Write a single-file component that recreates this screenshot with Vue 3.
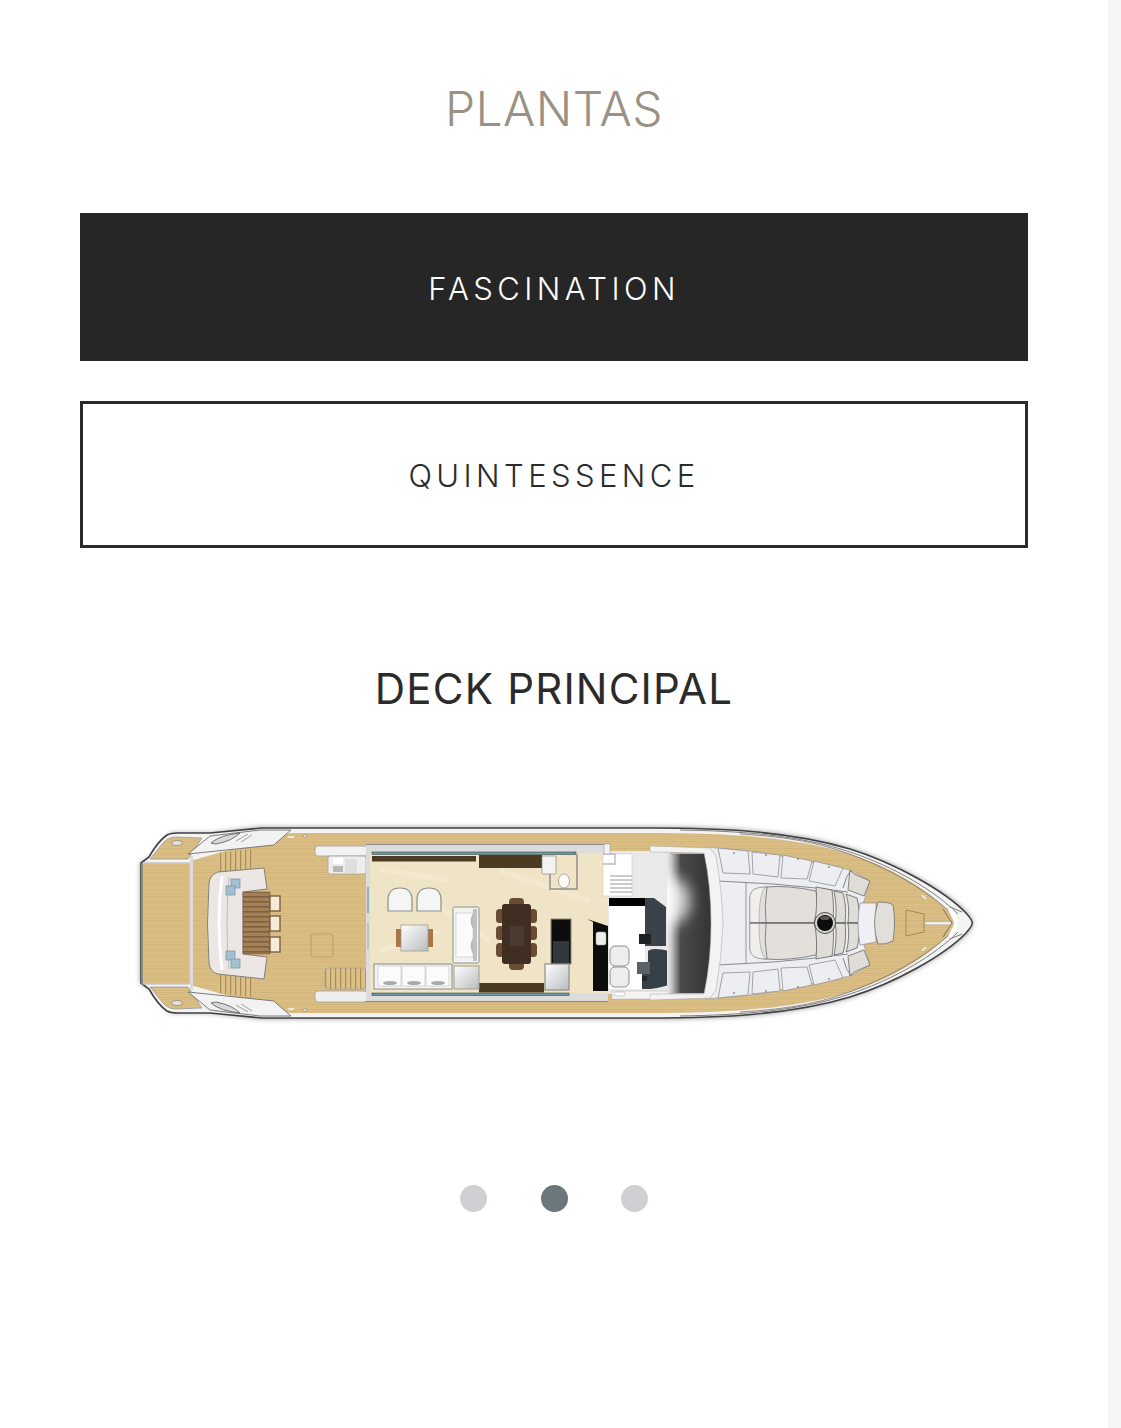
<script setup>
const foreSeats = [
  '718,847 748,850 750,873 723,872',
  '752,851 780,854 778,876 753,873',
  '783,854 812,860 807,878 781,877',
  '814,860 843,867 835,885 809,880'
]
const segments = [
  'M816,886 L832,889 C834,905 834,915 832,922 L814,922 C817,912 817,898 816,886 Z',
  'M834,890 L843,892 C846,903 846,913 845,922 L835,922 C837,912 836,900 834,890 Z',
  'M846,893 L857,897 C859,905 860,914 859,922 L848,922 C849,912 849,902 846,893 Z'
]
const blueSlits = [[372, 851, 204], [372, 992, 197]]
const armchairs = [388, 417]
const sofaSeats = [378, 402, 426]
const tableChairs = [895, 915, 936]
const cushions = [[231, 878], [226, 885], [226, 950], [231, 958]]
const dots = [false, true, false]
</script>

<template>
  <div class="page">
    <main class="content">
      <h1 class="title">PLANTAS</h1>
      <button class="tab tab-active" type="button">FASCINATION</button>
      <button class="tab" type="button">QUINTESSENCE</button>
      <h2 class="deck">DECK PRINCIPAL</h2>

      <svg class="plan" viewBox="120 810 870 220" width="870" height="220" role="img" aria-label="Deck principal">
        <defs>
          <pattern id="teak" width="8" height="2.4" patternUnits="userSpaceOnUse">
            <rect width="8" height="2.4" fill="#dcbf85" />
            <rect width="8" height="0.7" fill="#d0b278" />
          </pattern>
          <pattern id="tread" width="5" height="8" patternUnits="userSpaceOnUse">
            <rect width="5" height="8" fill="#dcc086" />
            <rect width="1.2" height="8" fill="#a88d5a" />
          </pattern>
          <pattern id="tabletop" width="10" height="5" patternUnits="userSpaceOnUse">
            <rect width="10" height="5" fill="#a38056" />
            <rect width="10" height="1.6" fill="#7f5f3c" />
          </pattern>
          <linearGradient id="screen" x1="0" x2="1" y1="0" y2="0">
            <stop offset="0" stop-color="#e8e8e8" />
            <stop offset="0.08" stop-color="#cfcfcf" />
            <stop offset="0.3" stop-color="#4a4a4a" />
            <stop offset="1" stop-color="#333" />
          </linearGradient>
          <linearGradient id="mirror" x1="0" x2="1" y1="0" y2="1">
            <stop offset="0" stop-color="#fff" />
            <stop offset="1" stop-color="#b9bcbf" />
          </linearGradient>
          <filter id="soft" x="-5%" y="-5%" width="110%" height="110%">
            <feGaussianBlur stdDeviation="0.55" />
          </filter>
          <filter id="haze" x="-5%" y="-10%" width="110%" height="120%">
            <feGaussianBlur stdDeviation="2.5" />
          </filter>
          <filter id="glow" x="-60%" y="-60%" width="220%" height="220%">
            <feGaussianBlur stdDeviation="7" />
          </filter>
          <clipPath id="screenClip">
            <path d="M667,853 L706,853 Q712,890 713,922 Q712,960 706,992 L667,992 Z" />
          </clipPath>
          <g id="half">
            <!-- stern quarter pad -->
            <path d="M150,858 L163,842 Q168,836 176,836 L202,837 L188,858 Z" fill="url(#teak)" stroke="#9b9b9b" stroke-width="0.8" />
            <ellipse cx="177" cy="842" rx="5.5" ry="2.5" fill="#e6e1d6" stroke="#8f8a7e" stroke-width="0.8" />
            <!-- aft side deck moulding -->
            <path d="M188,853 L210,835 L260,829 L291,829 L276,842 L274,844 Z" fill="#f2f2f3" stroke="#6e6e6e" stroke-width="0.9" />
            <path d="M211,842 Q220,834 240,832 Q232,840 216,843 Z" fill="#d8d8da" stroke="#555" stroke-width="0.8" />
            <path d="M236,840 L248,833 M241,841 L252,834" stroke="#8a8a8a" stroke-width="0.8" />
            <circle cx="305" cy="835" r="1.5" fill="#efeee8" stroke="#8a8a7a" stroke-width="0.6" />
            <ellipse cx="291" cy="836" rx="3.5" ry="1" fill="#eee" />
            <!-- outer rub rails on the foredeck -->
            <path d="M680,829 C740,830 800,834 850,851 C895,866 935,890 958,913" fill="none" stroke="#5f5f5f" stroke-width="0.8" />
            <path d="M740,833 C790,836 820,842 852,854 C895,870 930,892 952,913" fill="none" stroke="#747474" stroke-width="0.8" />
            <path d="M950,908 L957,922" stroke="#fff" stroke-width="4" />
            <path d="M943,908 L952,922 M950,906 L962,911" stroke="#5d5d5d" stroke-width="0.8" />
            <ellipse cx="924" cy="896" rx="3" ry="1" fill="#eee" transform="rotate(35 924 896)" />
            <!-- fore cabin seats -->
            <polygon v-for="p in foreSeats" :key="p" :points="p" fill="#eceef1" stroke="#8f9196" stroke-width="0.8" />
            <circle cx="734" cy="852" r="0.8" fill="#555" />
            <circle cx="766" cy="854" r="0.8" fill="#555" />
            <circle cx="798" cy="858" r="0.8" fill="#555" />
            <circle cx="829" cy="866" r="0.8" fill="#555" />
            <!-- forward corner cushions -->
            <path d="M850,869 L854,873 L870,880 L864,895 L848,889 Q849,878 850,869 Z" fill="#e0dcd7" stroke="#777" stroke-width="0.9" />
            <path d="M843,887 Q846,875 851,869" fill="none" stroke="#777" stroke-width="0.9" />
            <!-- panel seams around the sunpad -->
            <path d="M718,880 L773,883 L816,887 L848,891" fill="none" stroke="#7d7e82" stroke-width="0.9" />
            <path d="M746,881 L746,922" fill="none" stroke="#8d8e92" stroke-width="0.9" />
            <!-- sunpad cushion -->
            <path d="M766,886 Q788,884 816,890 Q820,905 818,922 L750,922 L750,895 Q751,886 766,886 Z" fill="#e3e0dc" stroke="#77767a" stroke-width="0.9" />
            <path d="M767,886 Q764,905 766,922" fill="none" stroke="#77767a" stroke-width="0.9" />
            <path d="M750,895 Q751,886 766,886 Q759,890 759,922 L750,922 Z" fill="#f1efec" stroke="#888" stroke-width="0.5" />
            <path v-for="d in segments" :key="d" :d="d" fill="#e0dcd7" stroke="#6f6e72" stroke-width="0.9" />
          </g>
        </defs>

        <!-- hull -->
        <path class="hull-haze" filter="url(#haze)" d="M140,862 L150,857 L170,832 L210,832 L260,826 L650,826 C720,826 790,829 850,847 C895,861 945,889 967,911 Q974,920 973,922 Q974,924 967,933 C945,955 895,983 850,997 C790,1015 720,1018 650,1018 L260,1018 L210,1012 L170,1012 L150,987 L140,982 Z" />

        <g filter="url(#soft)">
          <path d="M141,862 L149,856 Q158,840 167,834 Q171,832 178,832 L210,832 L262,827 L650,827 C720,827 790,830 850,848 C895,862 945,890 966,912 Q973,920 972,922 Q973,924 966,932 C945,954 895,982 850,996 C790,1014 720,1017 650,1017 L262,1017 L210,1012 L178,1012 Q171,1012 167,1010 Q158,1004 149,988 L141,982 Z" fill="#f3f3f3" stroke="#414141" stroke-width="1.6" />
          <path d="M190,860 L290,832 L650,832 C720,832 790,835 850,853 C890,866 925,886 952,913 L954,922 L952,931 C925,958 890,978 850,991 C790,1009 720,1012 650,1012 L290,1012 L190,984 Z" fill="url(#teak)" />

          <!-- stern platform -->
          <rect x="142" y="862" width="48" height="121" rx="2" fill="url(#teak)" stroke="#c8c8c8" stroke-width="1.6" />
          <rect x="190" y="855" width="3" height="134" fill="#dcdcdc" />
          <path d="M142,862 L142,983" stroke="#555" stroke-width="1" />

          <!-- fore cabin deck panel -->
          <path d="M706,846 L760,851 L815,862 L850,869 L870,880 L864,900 L857,912 L857,932 L864,944 L870,964 L850,975 L815,982 L760,993 L706,998 Z" fill="#eceef1" stroke="#a3a3a3" stroke-width="0.8" />

          <use href="#half" />
          <use href="#half" transform="translate(0 1844) scale(1 -1)" />

          <!-- aft steps -->
          <polygon points="217,852 252,848 254,868 220,871" fill="url(#tread)" />
          <polygon points="217,992 252,996 254,976 220,973" fill="url(#tread)" />

          <!-- aft sofa -->
          <path d="M264,867 L218,871 Q210,874 209,882 Q206,922 209,962 Q210,971 218,973 L264,978 L267,956 L243,953 L243,891 L267,888 Z" fill="#ece7e4" stroke="#85807a" stroke-width="1" />
          <path d="M222,875 Q216,922 222,969" fill="none" stroke="#fff" stroke-width="3" />
          <path d="M229,876 Q225,922 229,968" fill="none" stroke="#aaa6a0" stroke-width="0.7" />
          <rect v-for="c in cushions" :key="c[0] + '-' + c[1]" :x="c[0]" :y="c[1]" width="9" height="9" fill="#a2c0cf" stroke="#75909e" stroke-width="0.7" />
          <rect x="243" y="891" width="27" height="62" fill="url(#tabletop)" stroke="#6b5338" stroke-width="0.5" />
          <rect v-for="y in tableChairs" :key="y" x="270" :y="y" width="10" height="15" fill="#f6ecd6" stroke="#7a5f42" stroke-width="1.4" />
          <rect x="311" y="933" width="22" height="23" rx="3" fill="none" stroke="#c0a36c" stroke-width="1.2" />

          <!-- saloon surround -->
          <rect x="315" y="845" width="52" height="10" rx="3" fill="#f1f1ef" stroke="#a3a3a0" stroke-width="0.8" />
          <rect x="328" y="855" width="38" height="18" rx="2" fill="#eeeeec" stroke="#a3a3a0" stroke-width="0.8" />
          <rect x="333" y="857" width="10" height="6" fill="#fff" />
          <rect x="333" y="865" width="10" height="6" fill="#b7b7b4" />
          <rect x="345" y="858" width="12" height="14" fill="#dededc" />
          <rect x="315" y="990" width="52" height="11" rx="3" fill="#eeeeec" stroke="#a3a3a0" stroke-width="0.8" />
          <rect x="325" y="967" width="41" height="21" rx="3" fill="url(#tread)" stroke="#a3a3a0" stroke-width="0.8" />
          <rect x="366" y="843" width="242" height="158" fill="#dcdcdc" />
          <rect x="366" y="843" width="242" height="1" fill="#8b8b8b" />
          <rect x="366" y="1000" width="242" height="1" fill="#8b8b8b" />
          <rect x="367" y="886" width="2" height="26" fill="#8fb2ba" />
          <rect x="367" y="922" width="2" height="26" fill="#b9c6c6" />

          <!-- saloon floor -->
          <rect x="370" y="852" width="238" height="140" fill="#efe4c6" />
          <path d="M380,868 L450,880 M430,900 L490,940 M380,950 L440,930 M500,870 L590,900" stroke="#f7eed8" stroke-width="5" opacity="0.55" />
          <rect v-for="s in blueSlits" :key="s[1]" :x="s[0]" :y="s[1]" :width="s[2]" height="2.4" fill="#6f9aa4" stroke="#1d2a2c" stroke-width="0.5" />
          <rect x="372" y="855" width="104" height="5.5" fill="#4b3a26" />
          <rect x="479" y="854" width="63" height="13" fill="#4c3a24" />
          <rect x="479" y="982" width="65" height="9.5" fill="#4c3a24" />

          <!-- washroom -->
          <path d="M550,868 L550,888 L577,888 L577,853" fill="none" stroke="#a6a49c" stroke-width="2" />
          <rect x="542" y="855" width="14" height="18" rx="1" fill="#f3f3f0" stroke="#8b8b85" stroke-width="0.7" />
          <ellipse cx="564" cy="880" rx="5.5" ry="7" fill="#fbfbf8" stroke="#8b8b85" stroke-width="0.7" />

          <!-- armchairs -->
          <path v-for="x in armchairs" :key="x" :d="`M${x},910 L${x},899 Q${x},887 ${x + 12},887 Q${x + 24},887 ${x + 24},899 L${x + 24},910 Z`" fill="#f4f5f5" stroke="#8d8f86" stroke-width="1.2" />

          <!-- coffee table -->
          <rect x="396" y="928" width="5" height="18" fill="#a9754a" />
          <rect x="428" y="928" width="5" height="18" fill="#a9754a" />
          <rect x="401" y="924" width="27" height="26" fill="url(#mirror)" stroke="#a09c8b" stroke-width="0.8" />

          <!-- sofas -->
          <rect x="374" y="963" width="78" height="25" fill="#f3f3f2" stroke="#888" stroke-width="1" />
          <g v-for="x in sofaSeats" :key="x">
            <rect :x="x" y="965" width="23" height="20" fill="#fbfbfb" stroke="#bebebe" stroke-width="0.6" />
            <ellipse :cx="x + 12" cy="982" rx="7" ry="2" fill="#a7a9ab" />
          </g>
          <rect x="453" y="906" width="26" height="56" rx="1.5" fill="#f3f3f2" stroke="#8e8e8a" stroke-width="1" />
          <rect x="456" y="912" width="17" height="44" fill="#fbfbfb" stroke="#c3c3c3" stroke-width="0.6" />
          <rect x="473" y="908" width="4" height="52" fill="#bcc2c4" />
          <path d="M473,913 q-4,7 0,14 M473,938 q-4,7 0,14" fill="#b7bcbe" stroke="#a4a9ab" stroke-width="0.6" />
          <rect x="454" y="965" width="25" height="23" fill="url(#mirror)" stroke="#a09c8b" stroke-width="1" />

          <!-- dining table -->
          <g fill="#6a4c36">
            <rect x="496" y="908" width="8" height="14" rx="3.5" />
            <rect x="496" y="925" width="8" height="14" rx="3.5" />
            <rect x="496" y="942" width="8" height="14" rx="3.5" />
            <rect x="529" y="908" width="8" height="14" rx="3.5" />
            <rect x="529" y="925" width="8" height="14" rx="3.5" />
            <rect x="529" y="942" width="8" height="14" rx="3.5" />
            <rect x="509" y="897" width="15" height="9" rx="4" />
            <rect x="509" y="960" width="15" height="9" rx="4" />
          </g>
          <rect x="502" y="903" width="29" height="60" rx="3" fill="#3f2e24" />
          <rect x="510" y="925" width="14" height="20" fill="#4a3a30" />

          <!-- galley -->
          <rect x="551" y="918" width="20" height="45" fill="#111" stroke="#8b8674" stroke-width="1" />
          <rect x="553" y="940" width="16" height="22" fill="#33373b" />
          <rect x="545" y="963" width="24" height="26" fill="url(#mirror)" stroke="#8e8d84" stroke-width="1.2" />
          <path d="M587,918 L608,925 L608,990 L593,990 L593,921 Z" fill="#0c0c0c" />
          <rect x="596" y="931" width="10" height="13" rx="2" fill="#eeeeea" stroke="#aaa" stroke-width="0.5" />

          <!-- wheelhouse -->
          <rect x="608" y="850" width="62" height="143" fill="#e9e9ea" />
          <rect x="603" y="853" width="29" height="42" fill="#fff" stroke="#c7c7c7" stroke-width="0.6" />
          <path d="M603,853 h12 v10 h-12 M610,875 h22 M610,879 h22 M610,883 h22 M610,887 h22 M610,891 h22" fill="none" stroke="#b8bcbf" stroke-width="1.4" />
          <rect x="609" y="905" width="36" height="83" fill="#fff" />
          <path d="M609,897 L654,897 L666,906 L666,945 L645,945 L645,905 L609,905 Z" fill="#3b4248" />
          <rect x="609" y="897" width="36" height="8" fill="#050505" />
          <rect x="639" y="933" width="12" height="10" fill="#1d2227" />
          <path d="M648,950 Q652,946 670,950 Q684,958 685,972 Q680,984 650,988 L642,988 L642,968 L648,966 Z" fill="#383f46" />
          <rect x="637" y="961" width="13" height="12" fill="#5a6269" />
          <rect x="642" y="975" width="5" height="5" fill="#22272b" />
          <g fill="#eceded" stroke="#8e9094" stroke-width="1">
            <rect x="610" y="945" width="19" height="20" rx="5" />
            <rect x="610" y="966" width="19" height="20" rx="5" />
          </g>
          <rect x="612" y="990" width="58" height="8" fill="#f4f4f4" stroke="#b9b9b9" stroke-width="0.6" />
          <rect x="614" y="991" width="11" height="4" rx="2" fill="#fff" stroke="#9b9b9b" stroke-width="0.5" />
          <rect x="604" y="843" width="6" height="10" fill="#f3f3f3" stroke="#9f9f9f" stroke-width="0.6" />

          <!-- screen and fore cabin -->
          <path d="M667,853 L706,853 Q712,890 713,922 Q712,960 706,992 L667,992 Z" fill="url(#screen)" />
          <g clip-path="url(#screenClip)">
            <ellipse cx="670" cy="900" rx="20" ry="24" fill="#fff" opacity="0.8" filter="url(#glow)" />
          </g>
          <path d="M650,845 L710,847 L716,855 Q722,890 723,922 Q722,955 716,989 L710,997 L650,999 L650,993 L704,993 Q711,960 711,922 Q711,885 704,852 L650,851 Z" fill="#f3f3f3" stroke="#a3a3a3" stroke-width="0.5" />
          <path d="M750,922 L860,922" stroke="#5b5b5d" stroke-width="1.1" />

          <!-- bow cushions and hatch -->
          <path d="M860,902 L876,902 L876,941 L860,944 Q856,922 860,902 Z" fill="#eef0f3" stroke="#8e8e8e" stroke-width="0.7" />
          <path d="M878,901 Q890,901 893,904 Q896,920 893,940 Q885,944 878,943 Q871,922 878,901 Z" fill="#e2dfda" stroke="#7b7b7b" stroke-width="0.9" />
          <polygon points="906,909 924,913 924,931 906,935" fill="none" stroke="#9a8557" stroke-width="0.9" />
          <rect x="925" y="921" width="26" height="2.6" fill="#f5f5f5" stroke="#aaa" stroke-width="0.4" />
          <circle cx="825" cy="922" r="10.5" fill="#d7d6d2" stroke="#4f4f4f" stroke-width="1" />
          <circle cx="825" cy="922" r="8" fill="#0a0a0a" />
          <ellipse cx="825" cy="917" rx="5" ry="2" fill="#555" />
        </g>
      </svg>

      <div class="dots">
        <span v-for="(on, i) in dots" :key="i" class="dot" :class="{ 'dot-on': on }"></span>
      </div>
    </main>
    <div class="scrollbar"></div>
  </div>
</template>

<style scoped>
.page {
  display: flex;
  width: 1121px;
  height: 1428px;
  overflow: hidden;
  background: #fff;
  font-family: Inter, "Liberation Sans", sans-serif;
}
.content {
  flex: 1;
  min-width: 0;
  display: flex;
  flex-direction: column;
  align-items: center;
  padding: 0 80px;
  box-sizing: border-box;
}
.title {
  margin: 80px 0 0;
  height: 133px;
  line-height: 57px;
  font-size: 48px;
  font-weight: 300;
  letter-spacing: 0.4px;
  color: #9a9185;
}
.tab {
  width: 948px;
  height: 147.5px;
  margin: 0 0 40px;
  padding: 2px 0 0;
  box-sizing: border-box;
  background: #fff;
  border: 3px solid #2b2b2b;
  font-family: inherit;
  font-size: 31px;
  font-weight: 300;
  letter-spacing: 4.4px;
  color: #2b2b2b;
}
.tab-active {
  padding-top: 4px;
  background: #262626;
  border-color: #262626;
  color: #fff;
}
.deck {
  margin: 60px 0 0;
  height: 120px;
  line-height: 82px;
  font-size: 42px;
  font-weight: 400;
  letter-spacing: 1.2px;
  color: #2b2b2b;
}
.plan {
  display: block;
  flex: none;
  margin: 43px 0 0 2px;
  overflow: visible;
}
.hull-haze {
  fill: #a0a0a0;
}
.dots {
  display: flex;
  gap: 53.5px;
  margin-top: 154px;
}
.dot {
  width: 27px;
  height: 27px;
  border-radius: 50%;
  background: #ced0d3;
}
.dot-on {
  background: #6c767d;
}
.scrollbar {
  flex: none;
  width: 13px;
  background: #f5f5f5;
}
</style>
